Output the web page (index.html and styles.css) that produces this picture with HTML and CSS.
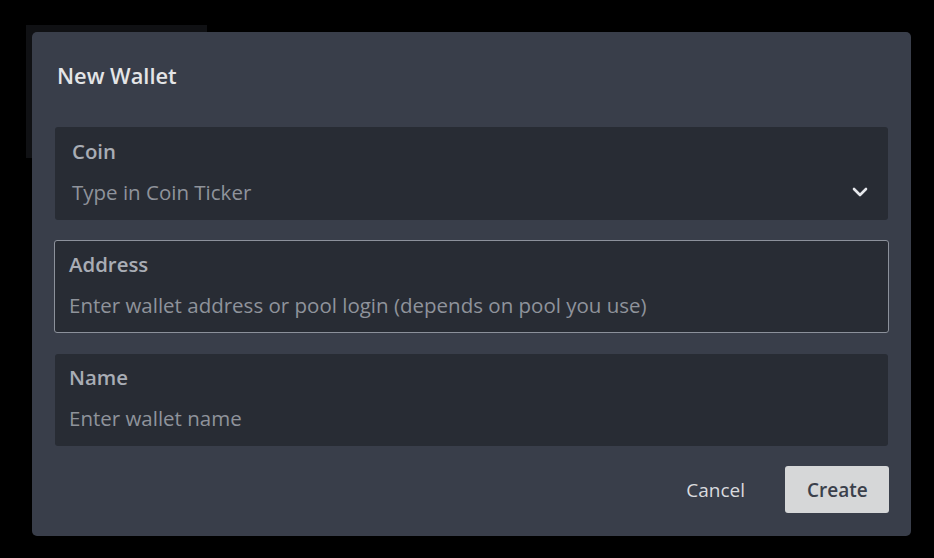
FILE: index.html
```html
<!DOCTYPE html>
<html lang="en">
<head>
    <meta charset="UTF-8">
    <meta name="viewport" content="width=device-width, initial-scale=1.0">
    <title>New Wallet</title>
    <link rel="stylesheet" href="styles.css">
</head>
<body>
    <div class="backdrop-card"></div>

    <div class="dialog">
        <h2 class="dialog-title">New Wallet</h2>

        <div class="field">
            <label class="field-label">Coin</label>
            <div class="field-row">
                <span class="field-placeholder">Type in Coin Ticker</span>
                <svg class="chevron" width="18" height="12" viewBox="0 0 18 12">
                    <path d="M3 3 L9 9 L15 3" fill="none" stroke="#e6e8ec" stroke-width="2.6" stroke-linecap="round" stroke-linejoin="round"/>
                </svg>
            </div>
        </div>

        <div class="field field-focused">
            <label class="field-label">Address</label>
            <span class="field-placeholder">Enter wallet address or pool login (depends on pool you use)</span>
        </div>

        <div class="field field-name">
            <label class="field-label">Name</label>
            <span class="field-placeholder">Enter wallet name</span>
        </div>

        <div class="actions">
            <button class="btn btn-cancel">Cancel</button>
            <button class="btn btn-create">Create</button>
        </div>
    </div>
</body>
</html>
```

FILE: styles.css
```css
body {
    margin: 0;
    width: 934px;
    height: 558px;
    background-color: #000;
    font-family: 'Open Sans', 'Noto Sans', sans-serif;
    position: relative;
    overflow: hidden;
}
.backdrop-card {
    position: absolute;
    left: 26px;
    top: 25px;
    width: 181px;
    height: 133px;
    background-color: #101114;
}
.dialog {
    position: absolute;
    left: 32px;
    top: 32px;
    width: 879px;
    height: 504px;
    box-sizing: border-box;
    padding: 30px 23px 0 23px;
    background-color: #393e4a;
    border-radius: 5px;
    display: flex;
    flex-direction: column;
}
.dialog-title {
    margin: 0 0 37px 2px;
    font-size: 21.8px;
    line-height: 28px;
    font-weight: 600;
    color: #e4e5e7;
}
.field {
    box-sizing: border-box;
    height: 93px;
    padding: 12px 16px 0 17px;
    margin-bottom: 20px;
    background-color: #282c34;
    border-radius: 3px;
    display: flex;
    flex-direction: column;
}
.field-focused {
    margin: 0 -1px 21px -1px;
    padding: 11px 14px 0 14px;
    border: 1px solid #8c919b;
}
.field-name {
    height: 92px;
    padding: 11px 14px 0 14px;
}
.field-label {
    font-size: 20.4px;
    line-height: 24px;
    font-weight: 600;
    color: #a9adb5;
    margin-bottom: 17px;
}
.field-row {
    display: flex;
    align-items: center;
    justify-content: space-between;
}
.field-placeholder {
    font-size: 20.5px;
    line-height: 24px;
    color: #8f939b;
}
.chevron {
    margin-right: 3px;
}
.actions {
    display: flex;
    justify-content: flex-end;
    gap: 18px;
    margin-right: -1px;
}
.btn {
    height: 47px;
    padding: 0 22px;
    border: none;
    border-radius: 3px;
    font-family: inherit;
    font-size: 19px;
    font-weight: 600;
    cursor: pointer;
}
.btn-cancel {
    background: none;
    color: #d9dbdf;
    font-weight: 500;
}
.btn-create {
    width: 104px;
    background-color: #d6d7d8;
    color: #3b404b;
}
```
